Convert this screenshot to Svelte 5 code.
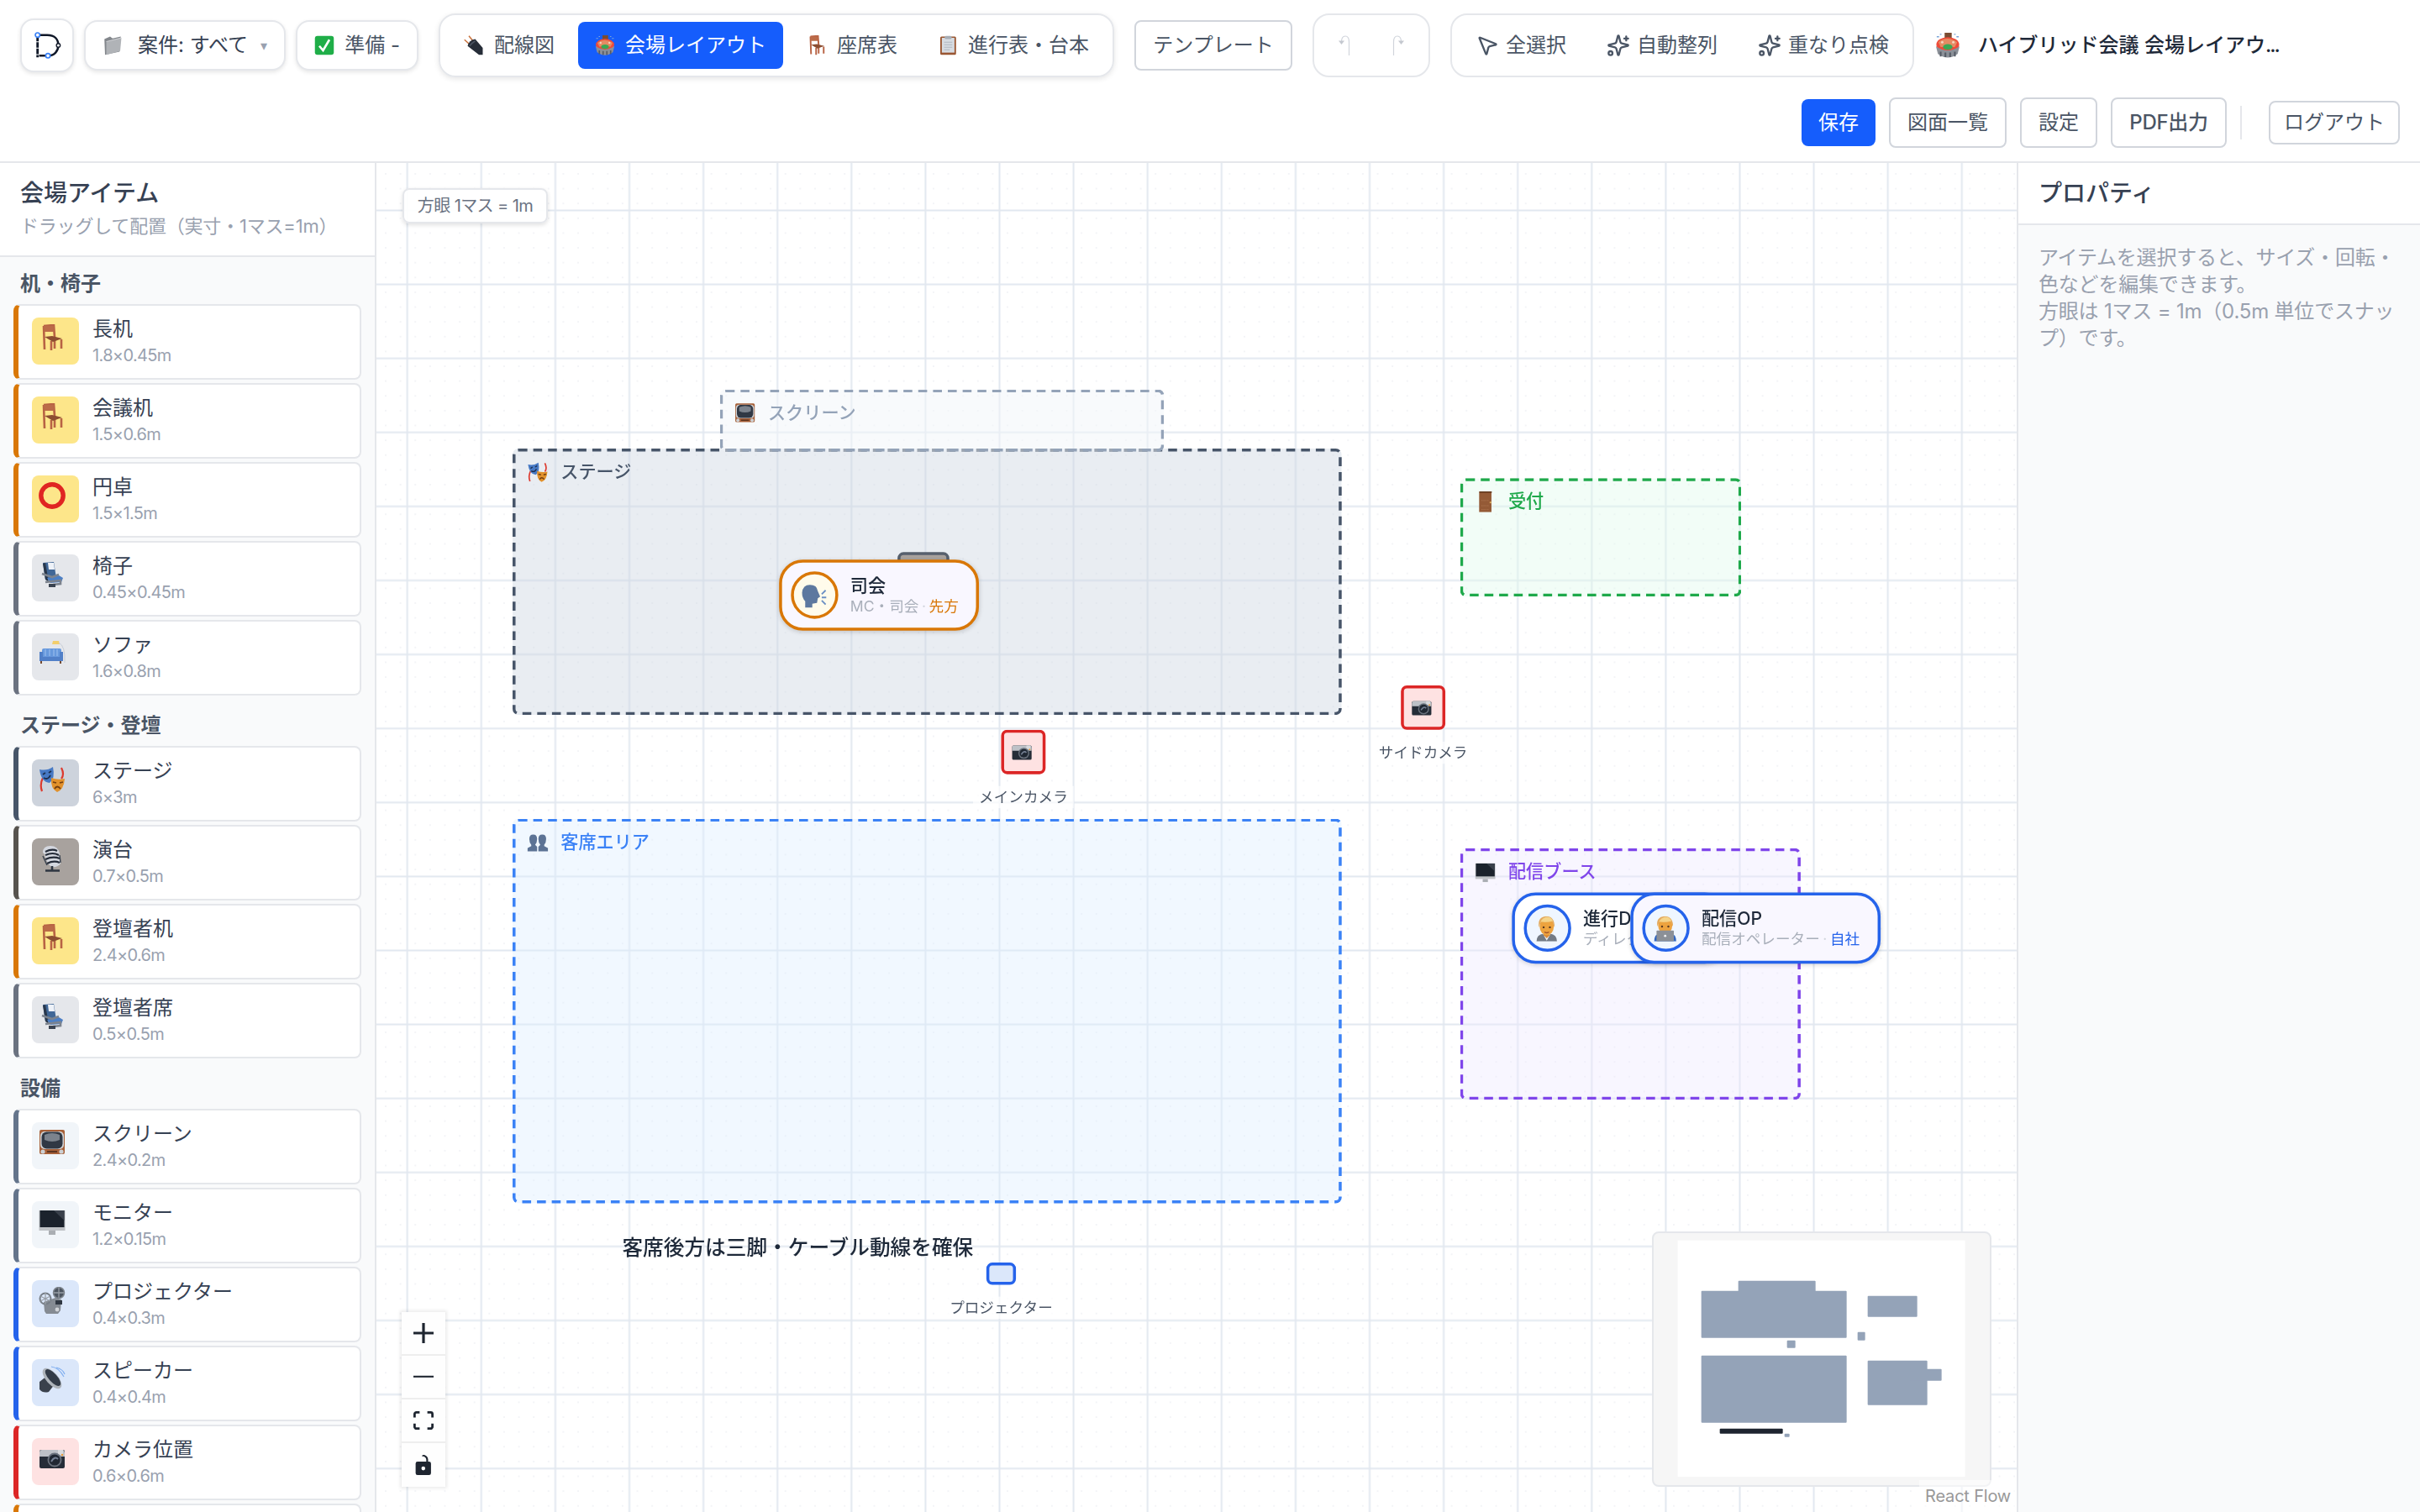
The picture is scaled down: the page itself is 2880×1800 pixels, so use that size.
<script>
  const tabs = [
    { icon: 'plug', label: '配線図' },
    { icon: 'arena', label: '会場レイアウト', active: true },
    { icon: 'chair', label: '座席表' },
    { icon: 'clip', label: '進行表・台本' }
  ];

  const amber = { edge: '#d97706', tile: '#fde68a' };
  const gray = { edge: '#6b7280', tile: '#e5e7eb' };
  const slate = { edge: '#64748b', tile: '#f1f5f9' };
  const blue = { edge: '#2563eb', tile: '#dbe7fa' };

  const sections = [
    {
      title: '机・椅子',
      items: [
        { name: '長机', size: '1.8×0.45m', icon: 'chair', ...amber },
        { name: '会議机', size: '1.5×0.6m', icon: 'chair', ...amber },
        { name: '円卓', size: '1.5×1.5m', icon: 'ring', ...amber },
        { name: '椅子', size: '0.45×0.45m', icon: 'seat', ...gray },
        { name: 'ソファ', size: '1.6×0.8m', icon: 'sofa', ...gray }
      ]
    },
    {
      title: 'ステージ・登壇',
      items: [
        { name: 'ステージ', size: '6×3m', icon: 'masks', edge: '#475569', tile: '#cdd3dc' },
        { name: '演台', size: '0.7×0.5m', icon: 'mic', edge: '#57534e', tile: '#a8a29e' },
        { name: '登壇者机', size: '2.4×0.6m', icon: 'chair', ...amber },
        { name: '登壇者席', size: '0.5×0.5m', icon: 'seat', ...gray }
      ]
    },
    {
      title: '設備',
      items: [
        { name: 'スクリーン', size: '2.4×0.2m', icon: 'tv', ...slate },
        { name: 'モニター', size: '1.2×0.15m', icon: 'monitor', ...slate },
        { name: 'プロジェクター', size: '0.4×0.3m', icon: 'film', ...blue },
        { name: 'スピーカー', size: '0.4×0.4m', icon: 'speaker', ...blue },
        { name: 'カメラ位置', size: '0.6×0.6m', icon: 'camera', edge: '#dc2626', tile: '#fee2e2' },
        { ...amber }
      ]
    }
  ];

  // Node geometry is in canvas units; 50 units make one metre.
  const zones = [
    { x: 0, y: 0, w: 560, h: 180, label: 'ステージ', icon: 'masks', color: '#475569', bg: 'rgba(203,213,225,.42)' },
    { x: 140, y: -40, w: 300, h: 42, label: 'スクリーン', icon: 'tv', color: '#94a3b8', bg: 'rgba(241,245,249,.5)' },
    { x: 0, y: 250, w: 560, h: 260, label: '客席エリア', icon: 'people', color: '#3b82f6', bg: 'rgba(219,237,254,.4)' },
    { x: 640, y: 20, w: 190, h: 80, label: '受付', icon: 'door', color: '#1fa94b', bg: 'rgba(222,250,234,.4)' },
    { x: 640, y: 270, w: 230, h: 170, label: '配信ブース', icon: 'monitor', color: '#7f45ea', bg: 'rgba(237,233,254,.4)' }
  ];

  const devices = [
    { x: 330, y: 190, w: 30, h: 30, label: 'メインカメラ', icon: 'camera', color: '#dc2626', bg: '#fee2e2' },
    { x: 600, y: 160, w: 30, h: 30, label: 'サイドカメラ', icon: 'camera', color: '#dc2626', bg: '#fee2e2' },
    { x: 320, y: 550, w: 20, h: 15, label: 'プロジェクター', color: '#2563eb', bg: '#dbe7fa' }
  ];

  const people = [
    { x: 180, y: 75, w: 135, name: '司会', role: 'MC・司会', side: '先方', icon: 'voice', color: '#d97706', face: '#fffbeb', bg: '#f9f7ff' },
    { x: 675, y: 300, w: 146, name: '進行D', role: 'ディレクター', side: '自社', icon: 'worker', color: '#2563eb', face: '#eff6ff', bg: '#ffffff' },
    { x: 755, y: 300, w: 169, name: '配信OP', role: '配信オペレーター', side: '自社', icon: 'coder', color: '#2563eb', face: '#eff6ff', bg: '#f9f7ff' }
  ];

  const mini = [
    [255, 291, 519, 168], [387, 255, 276, 40], [255, 522, 519, 240], [849, 309, 177, 75],
    [849, 540, 213, 159], [1000, 570, 113, 42], [813, 438, 27, 30], [561, 468, 30, 27], [552, 801, 18, 12]
  ];
</script>

{#snippet pic(name)}
  <svg class="pic" viewBox="0 0 32 32" fill="none">
    {#if name === 'folder'}
      <path d="M3 6l9-4 4 3 13-3-2 24-23 5z" fill="#83878c" /><path d="M6 10l24-6-2 21-22 6z" fill="#b0b3b7" /><path d="M6 10l24-6" stroke="#e0e2e4" />
    {:else if name === 'check'}
      <rect x="1" y="1" width="30" height="30" rx="4" fill="#1fae48" /><path d="M8 17l6 7L24 7" stroke="#fff" stroke-width="3.5" />
    {:else if name === 'plug'}
      <path d="M1 7l10 9M8 1l9 11" stroke="#c9713b" stroke-width="2" /><path d="M6 17q2-9 12-11l12 14v11h-6z" fill="#262d38" /><path d="M9 17q4-5 9-8" stroke="#4b5462" stroke-width="2" />
    {:else if name === 'arena'}
      <rect x="12" y="0" width="9" height="9" fill="#7a4b32" /><ellipse cx="16" cy="15" rx="14.500" ry="9.500" fill="#ef4b39" /><path d="M4 12q11-9 24 0l-3 6H7z" fill="#e58b63" /><ellipse cx="16" cy="18" rx="6" ry="3.500" fill="#3aa854" /><path d="M1 17q15 11 30 0l-2.500 10q-12.500 9-25 0z" fill="#8b9098" /><path d="M7 24v6m6-5v6m6-6v6m6-7v6" stroke="#555c66" stroke-width="2.200" /><circle cx="9" cy="12" r="1.600" fill="#f6d4bd" /><circle cx="23" cy="12" r="1.600" fill="#f6d4bd" /><path d="M2 5h3m22 0h3M6 2h2m16 0h2" stroke="#7aa5d8" stroke-width="1.500" />
    {:else if name === 'chair'}
      <path d="M6 2l12-1 1 14M6 2l1 28M18 2l1 14M19 16v13M15 20v11M27 18v11" stroke="#b86344" stroke-width="2.6" /><path d="M6 2h12v7H7z" fill="#bb6b48" /><path d="M7 15l9-1 12 3-11 4z" fill="#8c4d31" />
    {:else if name === 'clip'}
      <rect x="4" y="2" width="25" height="29" rx="2" fill="#9a5733" /><rect x="6.500" y="4" width="20" height="23.500" fill="#d7dce2" /><rect x="11" y="1" width="11" height="5" rx="2" fill="#a7adb5" /><path d="M10 11h13M10 15h13M10 19h13M10 23h9" stroke="#b1b8c1" stroke-width="1.5" />
    {:else if name === 'ring'}
      <circle cx="16" cy="16" r="13.2" stroke="#e02522" stroke-width="5.4" />
    {:else if name === 'seat'}
      <path d="M5 2l13-1 3 19-13 2z" fill="#416797" /><path d="M11 2h7l1 8h-7z" fill="#eef2f8" /><path d="M5 3l3 19 4 3-4-23z" fill="#29374a" /><path d="M10 20l14-3 5 3-2 5-13 1z" fill="#4c7fc5" /><path d="M4 15l12 4 8-3M8 25l18-2v4l-9 1" stroke="#7c838e" stroke-width="2.600" /><path d="M12 27v4h8v-4" fill="#3a4351" />
    {:else if name === 'sofa'}
      <path d="M17 1h7l1 4h-9z" fill="#f3ce6c" /><path d="M24 3q8 4 7 24" stroke="#c9ced6" /><rect x="4" y="10" width="23" height="12" rx="2" fill="#6799dd" /><path d="M8 11v8m5-8v8m5-8v8m4-8v8" stroke="#8fb5ea" stroke-width="1.4" /><path d="M1 14h4v6h20v-6h4v11H1z" fill="#5180c8" /><path d="M3 25v3m23-3v3" stroke="#734a32" stroke-width="2" />
    {:else if name === 'masks'}
      <path d="M5 14q-4 8-1 16M27 2q4 8 0 13" stroke="#dd3a2e" stroke-width="2.2" /><path d="M1 4q9 2 16-3 3 14-4 19Q3 19 1 4z" fill="#4779c4" /><path d="M5 10l3-2m4 0l3-2M6 14q5 3 8-3" stroke="#1c2e4d" stroke-width="1.8" /><path d="M15 14q8 3 16 1-1 13-9 16-8-4-7-17z" fill="#e1912c" /><path d="M17 19l4 1m4 0l4-1M19 27q3-5 7 0" stroke="#743e10" stroke-width="1.8" />
    {:else if name === 'mic'}
      <path d="M5 9q0-8 9-8 9 0 11 9l1 12q-3 5-11 4-6-5-8-15z" fill="#d4d7df" /><path d="M8 8q8-4 14-1M8 12q9-4 16 0M8 17q9-4 17-1M10 22q8-4 15-1" stroke="#242b38" stroke-width="2.2" /><path d="M5 13l5 11M25 12l1 9" stroke="#39424f" stroke-width="1.500" /><path d="M16 25v5M8 30.500h17" stroke="#2e3642" stroke-width="2.600" />
    {:else if name === 'tv'}
      <rect x="1" y="1" width="30" height="29" rx="2" fill="#a76038" /><rect x="2" y="3" width="28" height="21" rx="5" fill="#d0d3d6" /><rect x="3.500" y="3.500" width="25" height="20" rx="6" fill="#303844" /><path d="M7 7q9-4 18 0v6q-9 4-18 0z" fill="#7c838d" /><circle cx="5" cy="27" r="2.6" fill="#ccd0d4" /><circle cx="27" cy="27" r="2.6" fill="#ccd0d4" /><path d="M10 27h12" stroke="#5d3521" stroke-width="2" />
    {:else if name === 'monitor'}
      <rect x="0.500" y="3" width="31" height="24" fill="#bfc2c6" /><rect x="1.500" y="3" width="29" height="20" fill="#1b222c" /><path d="M18 3h12.500v12z" fill="#39404b" /><path d="M12 27h8v5h-8z" fill="#aaaeb3" />
    {:else if name === 'film'}
      <path d="M6 18l14-5 7 2-1 13-3 4H9l-2-3z" fill="#858b93" /><circle cx="8" cy="14" r="6.5" stroke="#777e87" stroke-width="2" /><circle cx="24" cy="7" r="6.5" fill="#4d5560" stroke="#7c838b" stroke-width="1.5" /><path d="M8 7v14M2 11l12 6M2 17l12-6M24 1v12M18 7h12" stroke="#989ea6" stroke-width="1.3" /><path d="M20 16h8v5h-8z" fill="#303843" /><circle cx="22" cy="27" r="2.4" fill="#d1d4d8" />
    {:else if name === 'speaker'}
      <path d="M1 19l9-7 9 10-7 9q-7 2-11-3z" fill="#3a414c" /><ellipse cx="16" cy="15" rx="7" ry="15" transform="rotate(-42 16 15)" fill="#aeb4bb" /><ellipse cx="17" cy="14" rx="5" ry="12.500" transform="rotate(-42 17 14)" fill="#333c49" /><path d="M15 1q9 1 15 12m-9-11q8 2 10 8" stroke="#81aff0" stroke-width="1.2" />
    {:else if name === 'camera'}
      <rect x="1" y="6" width="30" height="22" rx="2" fill="#252d38" /><path d="M1 9q0-3 3-3h24q3 0 3 4v4H1z" fill="#bdc1c7" /><path d="M23 6h6v6h-6z" fill="#d8dadd" /><circle cx="19" cy="18" r="8.500" fill="#69717c" /><circle cx="19" cy="18" r="6.6" fill="#202833" /><path d="M15 20q4-7 8-3" stroke="#758194" stroke-width="2" /><circle cx="28" cy="12" r="1.2" fill="#ea9a35" />
    {:else if name === 'people'}
      <path d="M3 11q0-7 6-7t6 7q0 6-3 9l3 3v7H0v-5l6-3v-2Q3 17 3 11zM17 11q0-7 6-7t6 7q0 6-3 9v2l6 3v5H17v-7l3-3q-3-3-3-9z" fill="#5c7395" />
    {:else if name === 'door'}
      <rect x="6.500" y="0" width="19" height="32" fill="#945a36" /><path d="M7 1h19" stroke="#693c22" stroke-width="2" /><path d="M10 14h11M10 22h11M10 28h11" stroke="#b27a54" stroke-dasharray="2 1" /><circle cx="24" cy="17" r="1.4" fill="#ddb060" />
    {:else if name === 'voice'}
      <path d="M1 12Q2 2 11 2q9 0 10 8l3 7-3 2-1 6-6 1v5H5v-8Q1 19 1 12z" fill="#5d789f" /><path d="M26 14l5-5m-5 9h6m-6 4l5 5" stroke="#6b8fc4" stroke-width="2" />
    {:else if name === 'worker'}
      <path d="M3 32q0-9 9-10h8q9 1 9 10z" fill="#737b85" /><path d="M11 22l5 9 5-9z" fill="#f6f7f9" /><path d="M12 18h8v6l-4 4-4-4z" fill="#db8b37" /><ellipse cx="16" cy="13" rx="9" ry="11" fill="#eda33f" /><path d="M6 14Q4 1 15 0q11 0 11 14-2-3-3-7-8 1-14 0-2 3-3 7z" fill="#e3a95c" /><path d="M8 7q3-6 9-6 5 0 7 5-8 2-16 1z" fill="#f5d48a" /><circle cx="12" cy="14" r="1.3" fill="#593a22" /><circle cx="20" cy="14" r="1.3" fill="#593a22" /><path d="M13 20q3 2 6 0" stroke="#a1532d" stroke-width="1.5" />
    {:else if name === 'coder'}
      <path d="M2 32q0-10 9-11h10q9 1 9 11z" fill="#3167c0" /><ellipse cx="16" cy="12" rx="9" ry="10" fill="#eda33f" /><path d="M6 13Q4 1 15 0q11 0 11 13-2-3-3-6-8 1-14 0-2 3-3 6z" fill="#e3a95c" /><path d="M8 7q3-6 9-6 5 0 7 5-8 2-16 1z" fill="#f5d48a" /><circle cx="12" cy="13" r="1.3" fill="#593a22" /><circle cx="20" cy="13" r="1.3" fill="#593a22" /><rect x="5" y="18" width="22" height="14" rx="1" fill="#8b9097" /><circle cx="16" cy="25" r="1.5" fill="#f0f1f3" />
    {/if}
  </svg>
{/snippet}

{#snippet sparkle()}
  <svg class="lucide" viewBox="0 0 24 24"><path d="M9.937 15.5A2 2 0 0 0 8.5 14.063l-6.135-1.582a.5.5 0 0 1 0-.962L8.5 9.936A2 2 0 0 0 9.937 8.5l1.582-6.135a.5.5 0 0 1 .963 0L14.063 8.5A2 2 0 0 0 15.5 9.937l6.135 1.581a.5.5 0 0 1 0 .964L15.5 14.063a2 2 0 0 0-1.437 1.437l-1.582 6.135a.5.5 0 0 1-.963 0zM20 3v4M22 5h-4" /><circle cx="4" cy="20" r="2" /></svg>
{/snippet}

<div class="app">
  <header>
    <div class="row">
      <button class="soft logo" aria-label="ホーム">
        <svg viewBox="0 0 40 40" fill="none">
          <path d="M6 8v27" stroke="#101828" stroke-width="3" stroke-dasharray="7 1" /><path d="M9 7h9c10 0 14 6 14 13S27 33 20 33H8" stroke="#101828" stroke-width="2.600" />
          <circle cx="6" cy="7" r="2.800" fill="#fff" stroke="#3b82f6" stroke-width="1.800" /><circle cx="19" cy="33" r="2.800" fill="#fff" stroke="#3b82f6" stroke-width="1.800" /><circle cx="32" cy="20" r="2.400" fill="#fff" stroke="#101828" stroke-width="1.400" />
        </svg>
      </button>
      <button class="soft project">{@render pic('folder')}<span>案件: すべて</span><span class="caret">▾</span></button>
      <button class="soft ready">{@render pic('check')}<span>準備 -</span></button>
      <nav>
        {#each tabs as tab}
          <button class="tab" class:active={tab.active}>{@render pic(tab.icon)}<span>{tab.label}</span></button>
        {/each}
      </nav>
      <button class="outline template">テンプレート</button>
      <div class="group history">
        <button aria-label="元に戻す"><svg viewBox="0 0 14 24"><path d="M12.5 24V8Q12.5 1 8 1T3.500 8" /><path class="tip" d="M0 6.500h7L3.500 11z" /></svg></button>
        <button aria-label="やり直す"><svg viewBox="0 0 14 24"><path d="M1.500 24V8Q1.500 1 6 1t4.500 7" /><path class="tip" d="M7 6.500h7L10.500 11z" /></svg></button>
      </div>
      <div class="group tools">
        <button><svg class="lucide" viewBox="0 0 24 24"><path d="M4.037 4.688a.495.495 0 0 1 .651-.651l16 6.500a.5.5 0 0 1-.063.947l-6.124 1.580a2 2 0 0 0-1.438 1.435l-1.579 6.126a.5.5 0 0 1-.947.063z" /></svg>全選択</button>
        <button>{@render sparkle()}自動整列</button>
        <button>{@render sparkle()}重なり点検</button>
      </div>
      <div class="doc">{@render pic('arena')}<span>ハイブリッド会議 会場レイアウ<i>...</i></span></div>
    </div>
    <div class="row actions">
      <button class="save">保存</button>
      <button class="outline">図面一覧</button>
      <button class="outline">設定</button>
      <button class="outline pdf">PDF出力</button>
      <i class="divider"></i>
      <button class="outline logout">ログアウト</button>
    </div>
  </header>

  <main>
    <aside class="palette">
      <div class="head">
        <h2>会場アイテム</h2>
        <p>ドラッグして配置（実寸・1マス=1m）</p>
      </div>
      <div class="list">
        {#each sections as section}
          <section>
            <h3>{section.title}</h3>
            {#each section.items as item}
              <div class="card" style:border-left-color={item.edge}>
                <div class="tile" style:background={item.tile}>{#if item.icon}{@render pic(item.icon)}{/if}</div>
                {#if item.name}<div class="meta"><b>{item.name}</b><small>{item.size}</small></div>{/if}
              </div>
            {/each}
          </section>
        {/each}
      </div>
    </aside>

    <div class="canvas">
      <svg class="grid">
        <defs>
          <pattern id="dots" x="19.8" y="39.4" width="17.62" height="17.62" patternUnits="userSpaceOnUse"><circle cx="8.810" cy="8.810" r="0.900" fill="#eef0f4" /></pattern>
          <pattern id="cells" x="-7.350" y="12.450" width="88.100" height="88.100" patternUnits="userSpaceOnUse"><path d="M44.050 0V88.100M0 44.050H88.100" stroke="#e2e8f0" stroke-width="2" /></pattern>
        </defs>
        <rect width="100%" height="100%" fill="url(#dots)" />
        <rect width="100%" height="100%" fill="url(#cells)" />
      </svg>

      <div class="viewport">
        {#each zones as z}
          <div class="zone" style:left="{z.x}px" style:top="{z.y}px" style:width="{z.w}px" style:height="{z.h}px" style:color={z.color} style:background={z.bg}>
            {@render pic(z.icon)}<span>{z.label}</span>
          </div>
        {/each}
        <div class="podium"></div>
        {#each devices as d}
          <div class="device" style:left="{d.x}px" style:top="{d.y}px" style:width="{d.w}px" style:height="{d.h}px" style:border-color={d.color} style:background={d.bg}>
            {#if d.icon}{@render pic(d.icon)}{/if}
            <span>{d.label}</span>
          </div>
        {/each}
        <div class="note">客席後方は三脚・ケーブル動線を確保</div>
        {#each people as p}
          <div class="person" style:left="{p.x}px" style:top="{p.y}px" style:width="{p.w}px" style:border-color={p.color} style:background={p.bg}>
            <div class="face" style:border-color={p.color} style:background={p.face}>{@render pic(p.icon)}</div>
            <div class="who">
              <b>{p.name}</b>
              <small>{p.role}<i>·</i><em style:color={p.color}>{p.side}</em></small>
            </div>
          </div>
        {/each}
      </div>

      <div class="legend">方眼 1マス = 1m</div>

      <div class="controls">
        <button aria-label="拡大"><svg viewBox="0 0 32 32"><path d="M32 18.133H18.133V32h-4.266V18.133H0v-4.266h13.867V0h4.266v13.867H32z" /></svg></button>
        <button aria-label="縮小"><svg viewBox="0 0 32 5"><path d="M0 1h32v2.800H0z" /></svg></button>
        <button aria-label="全体表示"><svg viewBox="0 0 32 30"><path d="M3.692 4.630c0-.53.4-.938.939-.938h5.215V0H4.708C2.130 0 0 2.054 0 4.630v5.216h3.692V4.631zM27.354 0h-5.200v3.692h5.170c.53 0 .984.4.984.939v5.215H32V4.631A4.624 4.624 0 0027.354 0zm.954 24.830c0 .532-.4.940-.939.940h-5.215v3.768h5.215c2.577 0 4.631-2.130 4.631-4.707v-5.139h-3.692v5.139zm-23.677.940a.919.919 0 01-.939-.940v-5.138H0v5.139c0 2.577 2.130 4.707 4.708 4.707h5.138V25.770H4.631z" /></svg></button>
        <button aria-label="ロック"><svg viewBox="0 0 25 32"><path d="M21.333 10.667H19.810V7.619C19.810 3.429 16.380 0 12.190 0c-4.114 1.828-1.370 2.133.305 2.438 1.676.305 4.420 2.590 4.420 5.181v3.048H3.047A3.056 3.056 0 000 13.714v15.238A3.056 3.056 0 003.048 32h18.285a3.056 3.056 0 003.048-3.048V13.714a3.056 3.056 0 00-3.048-3.047zM12.190 24.533a3.056 3.056 0 01-3.047-3.047 3.056 3.056 0 013.047-3.048 3.056 3.056 0 013.048 3.048 3.056 3.056 0 01-3.048 3.047z" /></svg></button>
      </div>

      <div class="minimap">
        <svg viewBox="85 85 1200 900">
          <rect x="171" y="111" width="1026" height="844" fill="#fff" />
          {#each mini as [x, y, w, h]}
            <rect {x} {y} width={w} height={h} rx="3" fill="#94a3b8" />
          {/each}
          <rect x="321" y="783" width="225" height="18" rx="3" fill="#1e2530" />
        </svg>
      </div>
      <div class="credit">React Flow</div>
    </div>

    <aside class="props">
      <div class="head"><h2>プロパティ</h2></div>
      <p>アイテムを選択すると、サイズ・回転・<br />色などを編集できます。<br />方眼は 1マス = 1m（0.5m 単位でスナッ<br />プ）です。</p>
    </aside>
  </main>
</div>

<style>
  :global(body) { margin: 0; background: #fff; }
  * { box-sizing: border-box; }
  .app {
    width: 2880px;
    height: 1800px;
    display: flex;
    flex-direction: column;
    overflow: hidden;
    background: #fff;
    color: #364153;
    font-family: Inter, 'Noto Sans CJK JP', sans-serif;
    font-size: 24px;
    line-height: 32px;
    white-space: nowrap;
  }
  button {
    display: flex;
    align-items: center;
    justify-content: center;
    flex: none;
    margin: 0;
    padding: 0;
    border: 0;
    background: none;
    color: #4a5565;
    font: inherit;
  }
  h2, h3, p { margin: 0; }
  .pic { display: block; flex: none; width: 24px; height: 24px; }

  header {
    flex: none;
    height: 194px;
    padding: 16px 24px;
    border-bottom: 2px solid #e5e7eb;
    display: flex;
    flex-direction: column;
    gap: 24px;
  }
  .row { display: flex; align-items: center; height: 76px; }
  .soft {
    height: 60px;
    border: 2px solid #e5e7eb;
    border-radius: 16px;
    background: #fff;
    box-shadow: 0 2px 5px rgba(0, 0, 0, 0.1);
    color: #364153;
  }
  .logo { width: 64px; height: 64px; margin-right: 12px; }
  .logo svg { width: 38px; height: 38px; margin-left: 4px; }
  .project { width: 240px; padding: 0 20px; justify-content: flex-start; margin-right: 12px; }
  .project span { margin-left: 18px; }
  .project .caret { margin-left: auto; font: 16px 'DejaVu Sans', sans-serif; color: #99a1af; }
  .ready { width: 146px; padding: 0 20px; justify-content: space-between; margin-right: 24px; color: #4a5565; }
  nav, .group {
    display: flex;
    align-items: center;
    gap: 8px;
    height: 76px;
    padding: 8px;
    border: 2px solid #e5e7eb;
    border-radius: 20px;
    flex: none;
  }
  nav { box-shadow: 0 2px 6px rgba(0, 0, 0, 0.1); margin-right: 24px; }
  .tab { height: 56px; padding: 0 20px; gap: 12px; border-radius: 8px; }
  .tab.active { background: #155dfc; color: #fff; }
  .outline { height: 60px; padding: 0 20px; border: 2px solid #d1d5dc; border-radius: 8px; }
  .template { width: 188px; margin-right: 24px; }
  .history { width: 140px; margin-right: 24px; }
  .history button { width: 56px; height: 56px; }
  .history svg { width: 14px; height: 24px; fill: none; stroke: #d1d5dc; stroke-width: 1.2; }
  .history .tip { fill: #c4c8cf; stroke: none; }
  .tools { margin-right: 24px; }
  .tools button { padding: 0 20px; gap: 8px; }
  .lucide { width: 28px; height: 28px; fill: none; stroke: currentColor; stroke-width: 2; stroke-linecap: round; stroke-linejoin: round; }
  .doc { display: flex; align-items: center; gap: 20px; color: #1e2939; font-weight: 500; }
  .doc .pic { width: 32px; height: 30px; }
  .doc i { font-style: normal; letter-spacing: -2px; }

  .actions { height: 60px; justify-content: flex-end; }
  .save { width: 88px; height: 56px; border-radius: 8px; background: #155dfc; color: #fff; }
  .actions .outline { margin-left: 16px; }
  .actions .pdf { width: 138px; padding: 0; letter-spacing: -0.3px; font-weight: 500; }
  .divider { width: 2px; height: 40px; margin-left: 16px; background: #e5e7eb; }
  .actions .logout { width: 156px; height: 52px; margin-left: 32px; padding: 0; }

  main { display: flex; flex: 1; min-height: 0; }
  aside { flex: none; overflow: hidden; background: #f9fafb; }
  .palette { width: 448px; border-right: 2px solid #e5e7eb; }
  aside .head { background: #fff; border-bottom: 2px solid #e5e7eb; padding: 16px 24px 0; }
  .palette .head { height: 112px; }
  h2 { font-size: 28px; line-height: 40px; font-weight: 500; }
  .palette p { font-size: 22px; line-height: 38px; letter-spacing: -0.2px; color: #99a1af; }
  .list { padding: 6px 16px 0; }
  section { display: flex; flex-direction: column; gap: 4px; margin-bottom: 10px; }
  h3 { height: 46px; padding: 10px 8px 0; font-size: 24px; line-height: 32px; font-weight: 600; color: #4a5565; }
  .card {
    display: flex;
    align-items: center;
    gap: 16px;
    height: 90px;
    padding: 0 16px;
    border: 2px solid #e5e7eb;
    border-left-width: 6px;
    border-radius: 8px;
    background: #fff;
  }
  .tile { width: 56px; height: 56px; margin-bottom: 2px; border-radius: 8px; padding: 8px; flex: none; }
  .tile .pic { width: 32px; height: 32px; }
  .meta { display: flex; flex-direction: column; }
  .meta b { font-weight: 400; line-height: 32px; }
  .meta small { font-size: 20px; line-height: 30px; letter-spacing: -0.65px; color: #99a1af; }

  .canvas { position: relative; flex: 1; overflow: hidden; background: #fff; }
  .grid { position: absolute; inset: 0; width: 100%; height: 100%; }
  .viewport { position: absolute; left: 162.200px; top: 339.800px; transform: scale(1.762); transform-origin: 0 0; }
  .zone {
    position: absolute;
    display: flex;
    align-items: flex-start;
    gap: 8.500px;
    padding: 5.500px 8px;
    border: 2px dashed;
    border-radius: 4px;
    font-size: 12px;
    line-height: 16px;
    font-weight: 500;
  }
  .zone .pic { width: 14px; height: 14px; margin-top: 1px; }
  .podium { position: absolute; left: 260px; top: 70px; width: 35px; height: 25px; border: 2px solid #57606d; border-radius: 4px; background: #a8a29e; }
  .device { position: absolute; display: flex; align-items: center; justify-content: center; border: 2px solid; border-radius: 4px; }
  .device .pic { width: 14px; height: 14px; margin-right: 3px; }
  .device span {
    position: absolute;
    top: calc(100% + 9.500px);
    left: 50%;
    transform: translateX(-50%);
    padding: 0 4px;
    background: rgba(255, 255, 255, 0.7);
    font-size: 10px;
    line-height: 15px;
    color: #4a5565;
  }
  .note { position: absolute; left: 74px; top: 529.700px; font-size: 14px; line-height: 20px; font-weight: 500; color: #1e2939; }
  .person {
    position: absolute;
    display: flex;
    align-items: center;
    gap: 8px;
    height: 48px;
    padding: 0 6px;
    border: 2px solid;
    border-radius: 16px;
    box-shadow: 0 1px 3px rgba(0, 0, 0, 0.15);
  }
  .face { display: flex; align-items: center; justify-content: center; flex: none; width: 32px; height: 32px; border: 2px solid; border-radius: 50%; }
  .face .pic { width: 17px; height: 17px; margin-right: 2px; }
  .who { display: flex; flex-direction: column; margin-bottom: 1px; }
  .who b { font-size: 12px; line-height: 15px; font-weight: 500; color: #1e2939; }
  .who small { font-size: 10px; line-height: 13px; color: #a9afba; }
  .who i { margin: 0 2px; font-style: normal; color: #d1d5dc; }
  .who em { font-style: normal; }

  .legend {
    position: absolute;
    left: 31px;
    top: 30px;
    width: 173px;
    height: 42px;
    border: 2px solid #e5e7eb;
    border-radius: 8px;
    background: rgba(255, 255, 255, 0.93);
    box-shadow: 0 2px 5px rgba(0, 0, 0, 0.12);
    font-size: 20px;
    line-height: 38px;
    letter-spacing: -0.6px;
    text-align: center;
    color: #6a7282;
  }
  .controls { position: absolute; left: 30px; bottom: 30px; box-shadow: 0 0 4px 2px rgba(0, 0, 0, 0.08); }
  .controls button { width: 52px; height: 52px; background: #fefefe; border-bottom: 2px solid #eee; }
  .controls button:last-child { border: 0; }
  .controls svg { width: 24px; max-height: 24px; fill: #1e2530; }
  .minimap { position: absolute; right: 30px; bottom: 30px; width: 404px; height: 304px; border: 2px solid #e5e7eb; border-radius: 8px; background: #f6f6f6; overflow: hidden; }
  .minimap svg { display: block; width: 400px; height: 300px; }
  .credit { position: absolute; right: 0; bottom: 0; height: 38px; padding: 0 7px; background: rgba(255, 255, 255, 0.5); font-size: 20px; line-height: 38px; letter-spacing: -0.2px; color: #999; }

  .props { width: 480px; border-left: 2px solid #e5e7eb; }
  .props .head { height: 74px; }
  .props p { padding: 23px 0 0 24px; color: #99a1af; line-height: 32px; letter-spacing: -0.2px; }
</style>
